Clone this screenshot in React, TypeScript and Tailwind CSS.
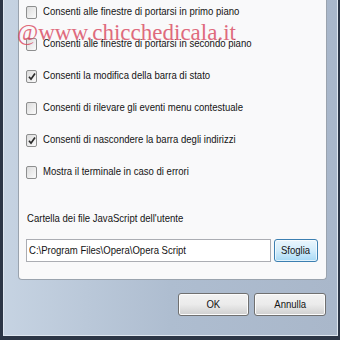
import React from 'react';

const font = { fontFamily: '"Liberation Sans", Arial, sans-serif' };

const options = [
    { label: 'Consenti alle finestre di portarsi in primo piano', checked: false },
    { label: 'Consenti alle finestre di portarsi in secondo piano', checked: false },
    { label: 'Consenti la modifica della barra di stato', checked: true },
    { label: 'Consenti di rilevare gli eventi menu contestuale', checked: false },
    { label: 'Consenti di nascondere la barra degli indirizzi', checked: true },
    { label: 'Mostra il terminale in caso di errori', checked: false },
];

// the screenshot is squeezed sideways, so text is narrowed to match
const Narrow = ({ children, center }: { children: React.ReactNode; center?: boolean }) => (
    <span className={`inline-block whitespace-nowrap scale-x-[0.83] ${center ? 'origin-center' : 'origin-left'}`}>{children}</span>
);

const Checkbox = ({ checked }: { checked: boolean }) => (
    <span className="w-[11px] h-[13px] shrink-0 rounded-[2px] border border-[#8e8f8f] bg-gradient-to-br from-[#dcdcdc] to-[#fbfbfb] flex items-center justify-center">
        {checked && (
            <svg width="8" height="9" viewBox="0 0 8 9">
                <path d="M1 4.8 L3 7.2 L7 1.4" fill="none" stroke="#2b2b2b" strokeWidth="1.7" />
            </svg>
        )}
    </span>
);

const App: React.FC = () => {
    return (
        <div className="w-[340px] h-[340px] bg-[#2c3646] pl-[3px] pr-[2px] pb-[4px] text-[#141414] text-[11.5px]" style={font}>
            <div className="relative h-full flex flex-col bg-gradient-to-r from-[#c6d3e2] via-[#aebdd0] to-[#a9b7ca] pl-[14px] pr-[10px] border-l border-r border-b border-[#dfe7f0]">
                <div className="h-[280px] shrink-0 bg-[#f9f9fa] border-l border-r border-b border-[#9aa3ae] rounded-b-[4px] flex flex-col pl-[7px]">
                    <div className="flex flex-col -mt-[4px]">
                        {options.map((o, i) => (
                            <div key={i} className="h-[32px] flex items-center gap-[6px]">
                                <Checkbox checked={o.checked} />
                                <Narrow>{o.label}</Narrow>
                            </div>
                        ))}
                    </div>
                    <div className="mt-[22px] pl-[1px]">
                        <Narrow>Cartella dei file JavaScript dell'utente</Narrow>
                    </div>
                    <div className="mt-[12px] flex gap-[3px]">
                        <div className="w-[245px] h-[23px] bg-white border border-[#abadb3] flex items-center pl-[2px]">
                            <Narrow>C:\Program Files\Opera\Opera Script</Narrow>
                        </div>
                        <button className="w-[44px] h-[23px] rounded-[3px] border border-[#3c7fb1] bg-gradient-to-b from-[#eaf6fd] via-[#d2ecfb] to-[#a7d9f5] shadow-[inset_0_0_0_1px_#ffffffaa]">
                            <Narrow center>Sfoglia</Narrow>
                        </button>
                    </div>
                </div>
                <div className="flex justify-end gap-[5px] mt-[13px] mr-[1px]">
                    <button className="w-[71px] h-[23px] rounded-[3px] border border-[#707070] bg-gradient-to-b from-[#f2f2f2] via-[#ebebeb] to-[#cfcfcf] shadow-[inset_0_0_0_1px_#fcfcfc]">
                        <Narrow center>OK</Narrow>
                    </button>
                    <button className="w-[72px] h-[23px] rounded-[3px] border border-[#707070] bg-gradient-to-b from-[#f2f2f2] via-[#ebebeb] to-[#cfcfcf] shadow-[inset_0_0_0_1px_#fcfcfc]">
                        <Narrow center>Annulla</Narrow>
                    </button>
                </div>
                <div className="absolute left-[13px] top-[21px] text-[23px] text-[#d9475e] opacity-80 leading-none" style={{ fontFamily: '"Liberation Serif", "Times New Roman", serif' }}>
                    @www.chicchedicala.it
                </div>
            </div>
        </div>
    );
};

export default App;
